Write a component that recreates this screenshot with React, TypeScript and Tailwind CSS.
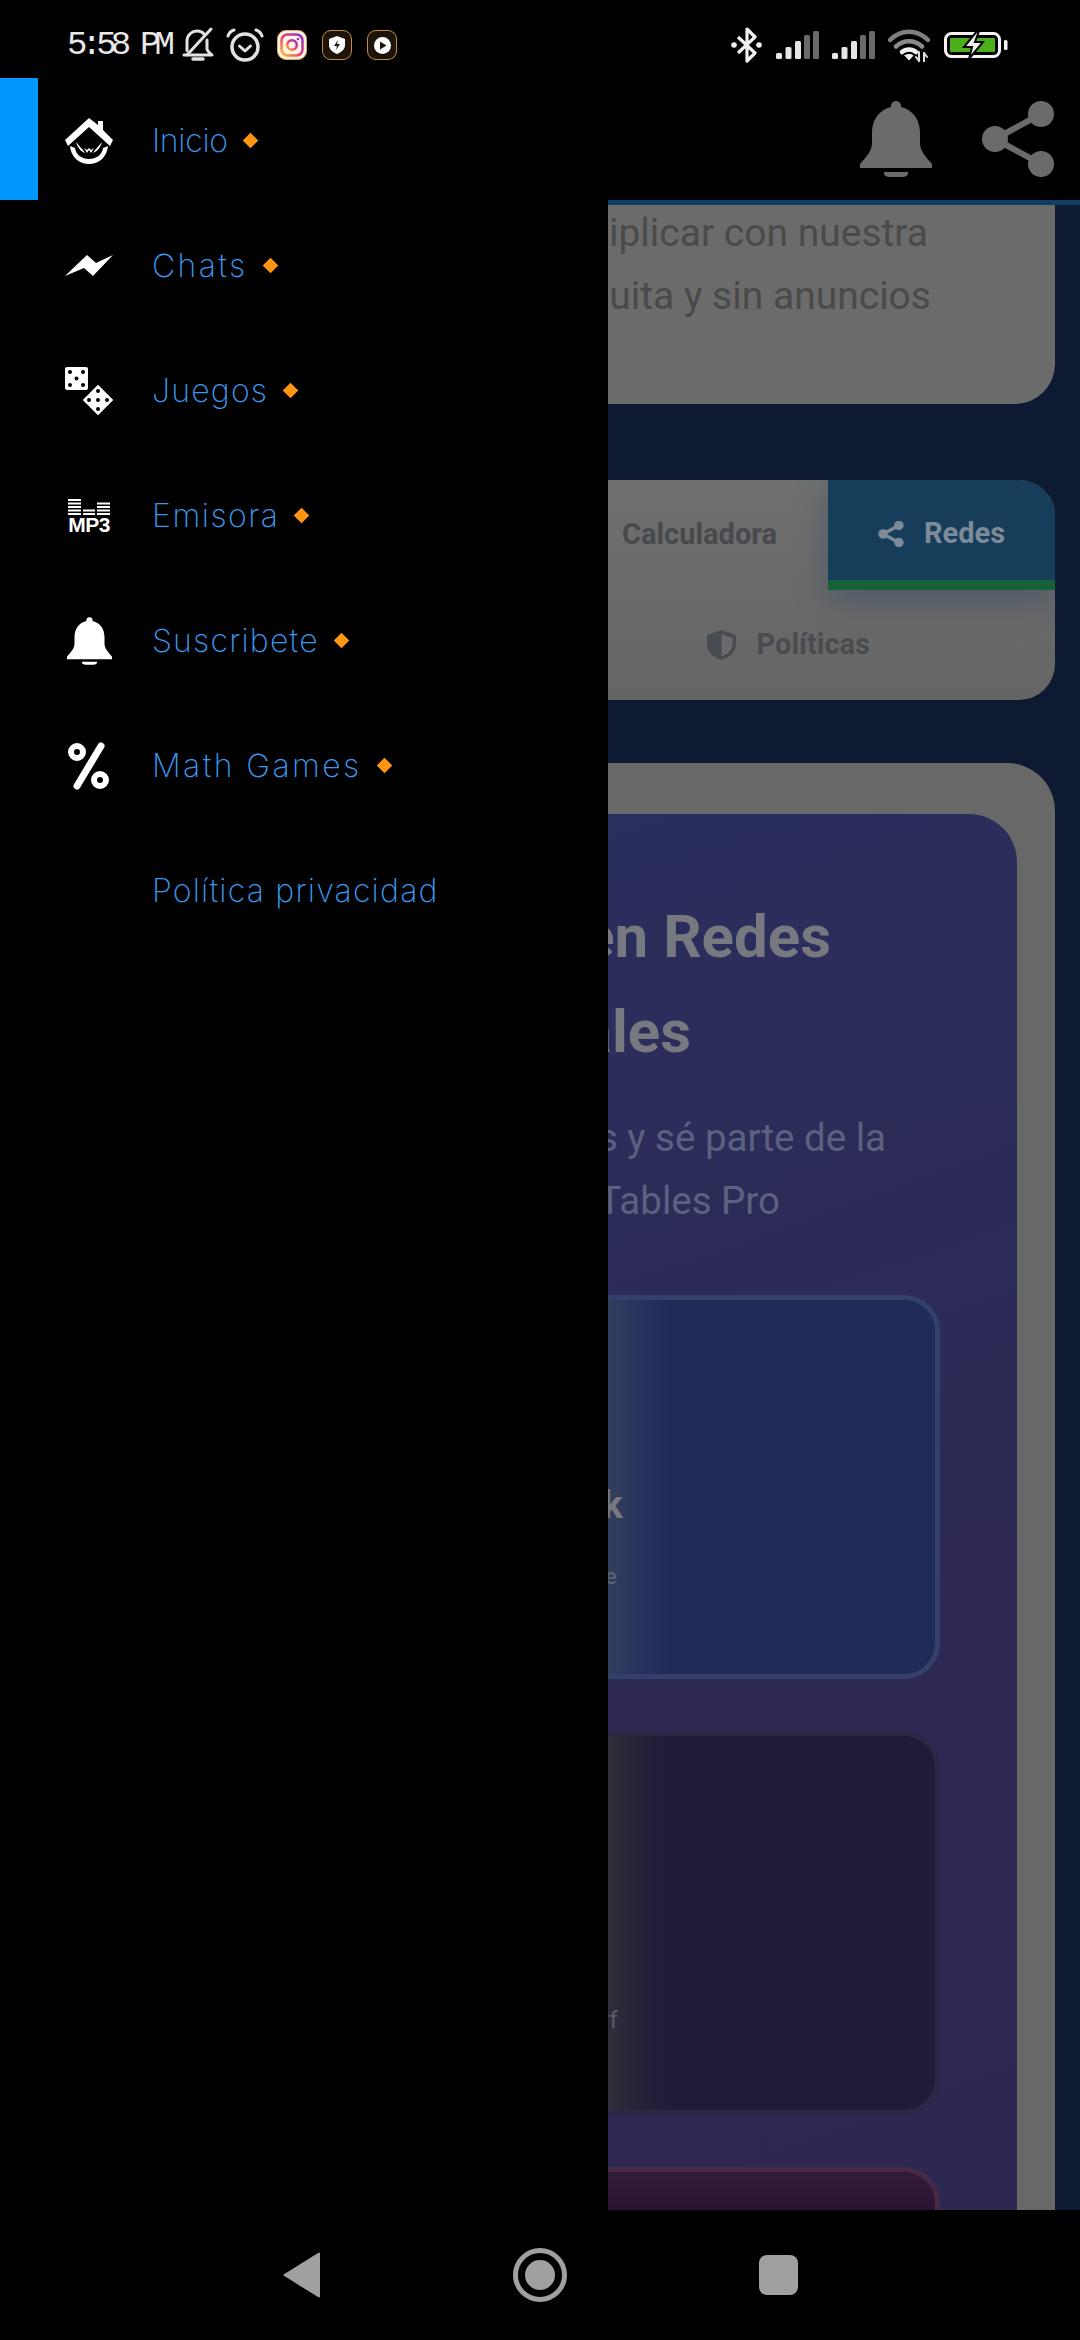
import React from "react";

const BELL = "M36 0a5 5 0 0 1 5 5v1c13 3 19 14 19 26v10c0 8 6 14 12 21v4H0v-4c6-7 12-13 12-21V32C12 20 18 9 31 6V5a5 5 0 0 1 5-5ZM24 71h24v1c0 3-3 4-6 4H30c-3 0-6-1-6-4Z";

function BellIcon({ w, h, fill }: { w: number; h: number; fill: string }) {
  return (
    <svg width={w} height={h} viewBox="0 0 72 76">
      <path d={BELL} fill={fill} />
    </svg>
  );
}

function ShareIcon({ w, h, fill }: { w: number; h: number; fill: string }) {
  return (
    <svg width={w} height={h} viewBox="0 0 72 76">
      <path d="M13 38 59 13M13 38l46 25" stroke={fill} strokeWidth="6" fill="none" />
      <circle cx="13" cy="38" r="13" fill={fill} />
      <circle cx="59" cy="13" r="13" fill={fill} />
      <circle cx="59" cy="63" r="13" fill={fill} />
    </svg>
  );
}

function Signal() {
  const bars = [
    [0, 6, "#e6e6e6"],
    [9.5, 12, "#e6e6e6"],
    [19, 18, "#e6e6e6"],
    [28, 24, "#6a6a6a"],
    [37, 28, "#6a6a6a"],
  ] as const;
  return (
    <svg width="43" height="28" viewBox="0 0 43 28">
      {bars.map(([x, h, c]) => (
        <rect key={x} x={x} y={28 - h} width="6" height={h} rx="1.5" fill={c} />
      ))}
    </svg>
  );
}

function StatusBar() {
  return (
    <div className="h-[78px] flex items-center justify-between pl-[67px] pr-[72px] pt-[12px] shrink-0">
      <div className="flex items-center">
        <span className="text-[34px] leading-none tracking-[-5.8px] text-[#e8e8e8] font-['Liberation_Mono',monospace] w-[115px] whitespace-nowrap">
          5:58 PM
        </span>
        <svg width="32" height="36" viewBox="0 0 32 36" fill="none" stroke="#e2e2e2" strokeWidth="3" strokeLinecap="round" strokeLinejoin="round">
          <path d="M5 23.5V14C5 8 10 4 15 4c3 0 5.500 1 7 3M25 13v9c0 2 3 4 5 6H2" />
          <path d="M29 2 5 28" />
          <path d="M11 32h10" strokeWidth="3.500" />
        </svg>
        <svg width="38" height="36" viewBox="0 0 38 36" className="ml-[12px]" fill="none" stroke="#e2e2e2" strokeLinecap="round" strokeLinejoin="round">
          <circle cx="19" cy="20" r="13" strokeWidth="3.500" />
          <path d="m13.500 19 5.500 5 5.500-5" strokeWidth="3" />
          <path d="M2 9c1-3 3-5 6-6M36 9c-1-3-3-5-6-6" strokeWidth="3" />
        </svg>
        <div className="ml-[13px] w-[30px] h-[30px] rounded-[9px] bg-[#fff4df] border border-[#d9a860] flex items-center justify-center">
          <svg width="24" height="24" viewBox="0 0 24 24" fill="none">
            <defs>
              <linearGradient id="ig" x1="0" y1="1" x2="1" y2="0">
                <stop offset="0" stopColor="#fbc02d" />
                <stop offset="0.45" stopColor="#ef3f78" />
                <stop offset="1" stopColor="#8a2fd0" />
              </linearGradient>
            </defs>
            <rect x="1.500" y="1.500" width="21" height="21" rx="6" stroke="url(#ig)" strokeWidth="2.500" />
            <circle cx="12" cy="12" r="4.800" stroke="url(#ig)" strokeWidth="2.500" />
            <circle cx="18" cy="6" r="1.300" fill="#b52fb0" />
          </svg>
        </div>
        <div className="ml-[15px] w-[30px] h-[30px] rounded-[9px] bg-[#1d1308] border border-[#c08d45] flex items-center justify-center">
          <svg width="16" height="18" viewBox="0 0 16 18">
            <path d="M8 0 16 3v6c0 4-3 7-8 9-5-2-8-5-8-9V3Z" fill="#fff" />
            <path d="M9 4 5 10h3l-1 4 4-6H8Z" fill="#1d1308" />
          </svg>
        </div>
        <div className="ml-[15px] w-[30px] h-[30px] rounded-[9px] bg-[#1d1308] border border-[#c08d45] flex items-center justify-center">
          <svg width="17" height="17" viewBox="0 0 17 17">
            <circle cx="8.500" cy="8.500" r="8.500" fill="#fff" />
            <path d="M6 4.500v8l6.500-4Z" fill="#1d1308" />
          </svg>
        </div>
      </div>
      <div className="flex items-center">
        <svg width="31" height="36" viewBox="0 0 31 36" fill="none" stroke="#f0f0f0" strokeWidth="3.200">
          <path d="m7 10 17 16-8 8V2l8 8L7 26" strokeLinejoin="round" />
          <circle cx="3" cy="18" r="2.800" fill="#f0f0f0" stroke="none" />
          <circle cx="28" cy="18" r="2.800" fill="#f0f0f0" stroke="none" />
        </svg>
        <div className="ml-[14px]"><Signal /></div>
        <div className="ml-[13px]"><Signal /></div>
        <svg width="42" height="33" viewBox="0 0 42 33" className="ml-[13px]" fill="none" strokeLinecap="round">
          <path d="M2 11c11-11 27-11 38 0" stroke="#7f7f7f" strokeWidth="4.500" />
          <path d="M8 17.500c7.500-7 18.500-7 26 0" stroke="#8a8a8a" strokeWidth="4.500" />
          <path d="M14 23c4-3.500 10-3.500 14 0" stroke="#f0f0f0" strokeWidth="4.500" />
          <path d="M17 26.500 21 31l4-4.500c-2.500-1.500-5.500-1.500-8 0Z" fill="#f0f0f0" stroke="#f0f0f0" strokeWidth="1" />
          <path d="M31 23v9M36 24v9" stroke="#e0e0e0" strokeWidth="2" />
          <path d="m28 28 3 4M39 28l-3-4" stroke="#e0e0e0" strokeWidth="2" />
        </svg>
        <svg width="64" height="28" viewBox="0 0 64 28" className="ml-[14px]">
          <rect x="1.500" y="2.500" width="54" height="23" rx="6" fill="none" stroke="#f4f4f4" strokeWidth="3" />
          <rect x="6" y="7" width="45" height="14" rx="1" fill="#4bb01c" />
          <path d="M33 0 20 16h8l-3 12 14-17h-8l4-11Z" fill="#f0f0f0" stroke="#000" strokeWidth="2" />
          <rect x="60" y="9" width="3.500" height="10" rx="1.500" fill="#f4f4f4" />
        </svg>
      </div>
    </div>
  );
}

function Page() {
  return (
    <div className="flex-1 min-h-0 flex flex-col font-['Roboto',sans-serif]">
      <div className="h-[122px] shrink-0 flex items-center justify-end gap-[50px] pr-[26px]">
        <BellIcon w={72} h={76} fill="#6b6b6b" />
        <ShareIcon w={72} h={76} fill="#6b6b6b" />
      </div>
      <div className="h-[5px] shrink-0 bg-[#0f3f66]" />
      <div className="flex-1 min-h-0 overflow-hidden bg-[#0d1a32] px-[25px]">
        <div className="h-[199px] rounded-b-[40px] bg-[#6b6b6b] text-[39px] leading-[63px] text-[#4a4a4a] whitespace-nowrap text-right">
          <div className="pr-[127px] -translate-y-[3px]">Aprende a multiplicar con nuestra</div>
          <div className="pr-[124px] -translate-y-[3px]">app gratuita y sin anuncios</div>
        </div>

        <div className="mt-[76px] h-[220px] rounded-[36px] bg-[linear-gradient(180deg,#6f6f6f,#656565)] overflow-hidden grid grid-cols-[803px_227px] grid-rows-[110px_110px] font-bold text-[29px]">
          <div className="flex items-center justify-end pr-[51px] text-[#464a4e]">Calculadora</div>
          <div className="flex items-center justify-center gap-[20px] pt-[8px] bg-[#163d5a] border-b-[10px] border-[#17603a] text-[#7d8b98] shadow-[0_10px_30px_rgba(40,70,100,0.45)]">
            <svg width="26" height="26" viewBox="0 0 72 76"><path d="M13 38 59 13M13 38l46 25" stroke="#7d8b98" strokeWidth="10" fill="none" /><circle cx="13" cy="38" r="14" fill="#7d8b98" /><circle cx="59" cy="13" r="14" fill="#7d8b98" /><circle cx="59" cy="63" r="14" fill="#7d8b98" /></svg>
            <span>Redes</span>
          </div>
          <div className="col-span-2 flex items-center justify-end gap-[21px] pr-[185px] text-[#484c50]">
            <svg width="29" height="30" viewBox="0 0 29 30">
              <path d="M14.500 0 29 5v9c0 8-6 13-14.500 16C6 27 0 22 0 14V5Z" fill="#484c50" />
              <path d="M14.500 4 25.500 8v6c0 6-4.500 10-11 12.500Z" fill="#6a6a6a" />
            </svg>
            <span>Políticas</span>
          </div>
        </div>

        <div className="mt-[63px] rounded-t-[48px] bg-[#686868] pt-[51px] px-[38px]">
          <div className="rounded-t-[48px] bg-[linear-gradient(160deg,#2a305e,#2e2854_60%,#2d2852)] pt-[75px] px-[77px]">
            <div className="text-[#76797f] font-bold text-[60px] leading-[95px] whitespace-nowrap text-right">
              <div className="pr-[109px]">Síguenos en Redes</div>
              <div className="pr-[249px]">Sociales</div>
            </div>
            <div className="mt-[27px] text-[#5b6180] text-[38.5px] leading-[63px] whitespace-nowrap text-right">
              <div className="pr-[54px]">Sigue nuestras redes y sé parte de la</div>
              <div className="pr-[160px]">comunidad de Math Tables Pro</div>
            </div>
            <div className="mt-[63px] flex flex-col gap-[52px]">
              <div className="h-[384px] rounded-[36px] border-[5px] border-[#33406a] bg-[linear-gradient(90deg,#343f5e_463px,#27345c_490px,#1f2c5a_525px)] flex flex-col items-center pt-[185px]">
                <div className="font-bold text-[38px] leading-[40px] text-[#77797f]">Facebook</div>
                <div className="mt-[39px] text-[22px] leading-[26px] text-[#60647a]">Ven y comparte</div>
              </div>
              <div className="h-[384px] rounded-[36px] border-[5px] border-[#2b2a44] bg-[linear-gradient(90deg,#2f2f3c_463px,#252438_490px,#1e1c38_525px)] flex flex-col items-center pt-[270px]">
                <div className="text-[24px] leading-[28px] text-[#5a5a68]">Videos de Surf</div>
              </div>
              <div className="h-[300px] rounded-[36px] border-[5px] border-[#472a48] bg-[linear-gradient(180deg,#341b3a,#2a1330_40px)]" />
            </div>
          </div>
        </div>
      </div>
    </div>
  );
}

function NavBar() {
  return (
    <div className="h-[130px] shrink-0 flex items-center justify-center">
      <svg width="38" height="46" viewBox="0 0 38 46" className="absolute left-[283px]">
        <path d="M36 1.500v43L1.500 23Z" fill="#a0a0a0" stroke="#a0a0a0" strokeWidth="2" strokeLinejoin="round" />
      </svg>
      <svg width="54" height="54" viewBox="0 0 54 54">
        <circle cx="27" cy="27" r="24.500" fill="none" stroke="#a0a0a0" strokeWidth="5" />
        <circle cx="27" cy="27" r="15" fill="#a0a0a0" />
      </svg>
      <div className="absolute left-[759px] w-[39px] h-[40px] rounded-[8px] bg-[#a0a0a0]" />
    </div>
  );
}

const navIcons: Record<string, React.ReactNode> = {
  Inicio: (
    <svg width="48" height="46" viewBox="0 0 48 46" fill="#fff">
      <path d="M24 0 33 7V3h5v9l10 10-3 6L24 9 3 28l-3-6Z" />
      <path d="M5 28c1 11 9 18 19 18s18-7 19-18l-5 2c-1 7-7 11-14 11S11 37 10 30Z" />
      <path d="M11 24c2 7 6 10 9 11l-2-3c-3-3-5-6-7-8Zm26 0c-2 7-6 10-9 11l2-3c3-3 5-6 7-8ZM19 30l3 5 2-3 2 3 3-5-3 2-2-2-2 2Z" />
    </svg>
  ),
  Chats: (
    <svg width="48" height="21" viewBox="0 0 48 21" fill="#fff">
      <path d="M0 21 22 0l9 8L48 0 28 21l-9-8Z" />
    </svg>
  ),
  Juegos: (
    <svg width="48" height="48" viewBox="0 0 48 48">
      <rect width="23" height="23" rx="2" fill="#fff" />
      <path d="M33 18 48 33 33 48 18 33Z" fill="#fff" stroke="#fff" strokeWidth="0.500" strokeLinejoin="round" />
      {[[5, 5], [18, 5], [11.5, 11.5], [5, 18], [18, 18], [33, 24], [33, 42], [24, 33], [42, 33], [33, 33]].map(([x, y]) => (
        <circle key={`${x}-${y}`} cx={x} cy={y} r="2" fill="#000" />
      ))}
    </svg>
  ),
  Emisora: (
    <div className="flex flex-col items-center w-[42px]">
      <svg width="42" height="17" viewBox="0 0 42 17" fill="#fff">
        {[0, 3.500, 7, 10.500, 14].map((y) => <rect key={y} x="0" y={y} width="13" height="2" />)}
        {[10.500, 14].map((y) => <rect key={y} x="15" y={y} width="12" height="2" />)}
        {[3.500, 7, 10.500, 14].map((y) => <rect key={y} x="29" y={y} width="13" height="2" />)}
      </svg>
      <span className="text-[21px] leading-[17px] font-bold text-white font-['Liberation_Sans',sans-serif] tracking-[-0.5px]">MP3</span>
    </div>
  ),
  Suscribete: <BellIcon w={45} h={48} fill="#fff" />,
  "Math Games": (
    <svg width="42" height="48" viewBox="0 0 42 48" fill="none" stroke="#fff">
      <circle cx="9" cy="10" r="6" strokeWidth="6" />
      <circle cx="32" cy="38" r="6" strokeWidth="6" />
      <path d="M33 4 9 44" strokeWidth="7" strokeLinecap="round" />
    </svg>
  ),
};

const items = [
  { label: "Inicio", track: "tracking-[-0.3px]" },
  { label: "Chats", track: "tracking-[2.4px]" },
  { label: "Juegos", track: "tracking-[1.2px]" },
  { label: "Emisora", track: "tracking-[1.5px]" },
  { label: "Suscribete", track: "tracking-[1.2px]" },
  { label: "Math Games", track: "tracking-[2.4px]" },
  { label: "Política privacidad", track: "tracking-[1.2px]" },
];

function Drawer() {
  return (
    <div className="absolute left-0 top-[78px] bottom-[130px] w-[608px] bg-black font-['Inter',sans-serif]">
      {items.map(({ label, track }, i) => (
        <div key={label} className="relative h-[125px] flex items-center pl-[65px]">
          {i === 0 && <div className="absolute left-0 top-0 w-[38px] h-[122px] bg-[#0098ff]" />}
          <div className="w-[48px] mr-[39px] flex justify-center items-center">{navIcons[label]}</div>
          <span className={`text-[32px] font-extralight text-[#3a98ee] leading-none whitespace-nowrap ${track}`}>{label}</span>
          {label !== "Política privacidad" && (
            <span className="ml-[17px] w-[11px] h-[11px] rotate-45 bg-[#ff9512]" />
          )}
        </div>
      ))}
    </div>
  );
}

export default function App() {
  return (
    <div className="relative w-[1080px] h-[2340px] bg-black overflow-hidden flex flex-col">
      <StatusBar />
      <Page />
      <NavBar />
      <Drawer />
    </div>
  );
}
